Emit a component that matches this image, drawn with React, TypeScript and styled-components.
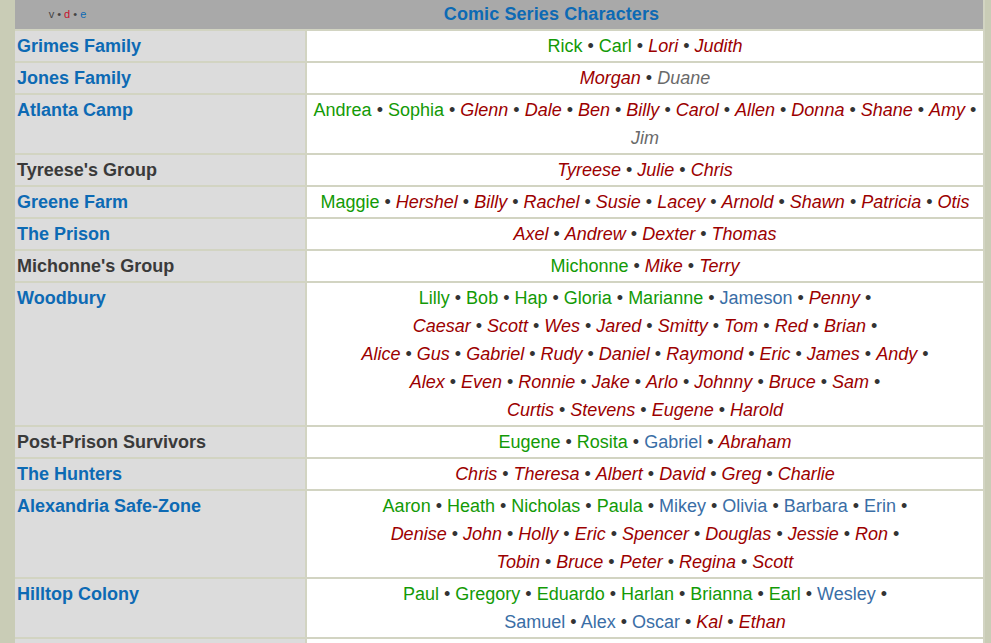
import React from "react";
import styled, { createGlobalStyle } from "styled-components";

type Kind = "g" | "b" | "r" | "x";
type Entry = [string, Kind];
type Group = { label: string; link: boolean; lines: Entry[][] };

const r = (...names: string[]): Entry[] => names.map((n) => [n, "r"] as Entry);

const groups: Group[] = [
  { label: "Grimes Family", link: true, lines: [[["Rick", "g"], ["Carl", "g"], ...r("Lori", "Judith")]] },
  { label: "Jones Family", link: true, lines: [[["Morgan", "r"], ["Duane", "x"]]] },
  {
    label: "Atlanta Camp",
    link: true,
    lines: [
      [["Andrea", "g"], ["Sophia", "g"], ...r("Glenn", "Dale", "Ben", "Billy", "Carol", "Allen", "Donna", "Shane", "Amy")],
      [["Jim", "x"]],
    ],
  },
  { label: "Tyreese's Group", link: false, lines: [r("Tyreese", "Julie", "Chris")] },
  {
    label: "Greene Farm",
    link: true,
    lines: [[["Maggie", "g"], ...r("Hershel", "Billy", "Rachel", "Susie", "Lacey", "Arnold", "Shawn", "Patricia", "Otis")]],
  },
  { label: "The Prison", link: true, lines: [r("Axel", "Andrew", "Dexter", "Thomas")] },
  { label: "Michonne's Group", link: false, lines: [[["Michonne", "g"], ...r("Mike", "Terry")]] },
  {
    label: "Woodbury",
    link: true,
    lines: [
      [["Lilly", "g"], ["Bob", "g"], ["Hap", "g"], ["Gloria", "g"], ["Marianne", "g"], ["Jameson", "b"], ["Penny", "r"]],
      r("Caesar", "Scott", "Wes", "Jared", "Smitty", "Tom", "Red", "Brian"),
      r("Alice", "Gus", "Gabriel", "Rudy", "Daniel", "Raymond", "Eric", "James", "Andy"),
      r("Alex", "Even", "Ronnie", "Jake", "Arlo", "Johnny", "Bruce", "Sam"),
      r("Curtis", "Stevens", "Eugene", "Harold"),
    ],
  },
  {
    label: "Post-Prison Survivors",
    link: false,
    lines: [[["Eugene", "g"], ["Rosita", "g"], ["Gabriel", "b"], ["Abraham", "r"]]],
  },
  { label: "The Hunters", link: true, lines: [r("Chris", "Theresa", "Albert", "David", "Greg", "Charlie")] },
  {
    label: "Alexandria Safe-Zone",
    link: true,
    lines: [
      [["Aaron", "g"], ["Heath", "g"], ["Nicholas", "g"], ["Paula", "g"], ["Mikey", "b"], ["Olivia", "b"], ["Barbara", "b"], ["Erin", "b"]],
      r("Denise", "John", "Holly", "Eric", "Spencer", "Douglas", "Jessie", "Ron"),
      r("Tobin", "Bruce", "Peter", "Regina", "Scott"),
    ],
  },
  {
    label: "Hilltop Colony",
    link: true,
    lines: [
      [["Paul", "g"], ["Gregory", "g"], ["Eduardo", "g"], ["Harlan", "g"], ["Brianna", "g"], ["Earl", "g"], ["Wesley", "b"]],
      [["Samuel", "b"], ["Alex", "b"], ["Oscar", "b"], ["Kal", "r"], ["Ethan", "r"]],
    ],
  },
];

const Global = createGlobalStyle`
  html, body {
    margin: 0;
    padding: 0;
    overflow: hidden;
    background: #c9ccb6;
  }
  body {
    font-family: "Liberation Sans", Arial, sans-serif;
  }
`;

const Page = styled.div`
  padding-left: 15px;
  width: 991px;
  height: 643px;
  box-sizing: border-box;
  overflow: hidden;
`;

const Navbox = styled.div`
  display: grid;
  grid-template-columns: 290px 676px;
  column-gap: 2px;
  row-gap: 2px;
  width: 969px;
  padding-right: 1px;
  background: #d2d4c2;
  font-size: 18px;
`;

const Header = styled.div`
  grid-column: 1 / span 2;
  height: 29px;
  background: #a9a9a9;
  display: flex;
  align-items: center;
`;

const Navbar = styled.div`
  width: 105px;
  flex: none;
  text-align: center;
  font-size: 11px;
  color: #444;
  padding-bottom: 1px;
`;

const NavLetter = styled.span<{ $c: string }>`
  color: ${(p) => p.$c};
`;

const Title = styled.div`
  flex: 1;
  text-align: center;
  font-weight: bold;
  color: #0d6ab4;
  font-size: 18px;
  letter-spacing: 0.1px;
`;

const GroupCell = styled.div<{ $link: boolean }>`
  background: #dcdcdc;
  padding: 1px 2px;
  line-height: 28px;
  font-weight: bold;
  color: ${(p) => (p.$link ? "#0d6ab4" : "#3a3a3a")};
`;

const ListCell = styled.div<{ $empty?: boolean }>`
  background: #ffffff;
  padding: 1px 4px;
  line-height: 28px;
  text-align: center;
  min-height: ${(p) => (p.$empty ? "28px" : "0")};
`;

const Line = styled.div`
  white-space: nowrap;
`;

const colors: Record<Kind, string> = {
  g: "#139a06",
  b: "#3a6ea6",
  r: "#9c0000",
  x: "#6a6a6a",
};

const Name = styled.span<{ $k: Kind }>`
  color: ${(p) => colors[p.$k]};
  font-style: ${(p) => (p.$k === "r" || p.$k === "x" ? "italic" : "normal")};
`;

const Dot = styled.span`
  color: #333;
`;

function ListLine({ entries, more }: { entries: Entry[]; more: boolean }) {
  return (
    <Line>
      {entries.map(([n, k], i) => (
        <React.Fragment key={i}>
          {i > 0 && <Dot> • </Dot>}
          <Name $k={k}>{n}</Name>
        </React.Fragment>
      ))}
      {more && <Dot> •</Dot>}
    </Line>
  );
}

export default function App() {
  return (
    <>
      <Global />
      <Page>
        <Navbox>
          <Header>
            <Navbar>
              <NavLetter $c="#444">v</NavLetter> • <NavLetter $c="#c8102e">d</NavLetter> •{" "}
              <NavLetter $c="#0d6ab4">e</NavLetter>
            </Navbar>
            <Title>Comic Series Characters</Title>
          </Header>
          {groups.map((g) => (
            <React.Fragment key={g.label}>
              <GroupCell $link={g.link}>{g.label}</GroupCell>
              <ListCell>
                {g.lines.map((ln, i) => (
                  <ListLine key={i} entries={ln} more={i < g.lines.length - 1} />
                ))}
              </ListCell>
            </React.Fragment>
          ))}
          <GroupCell $link={false} />
          <ListCell $empty />
        </Navbox>
      </Page>
    </>
  );
}
